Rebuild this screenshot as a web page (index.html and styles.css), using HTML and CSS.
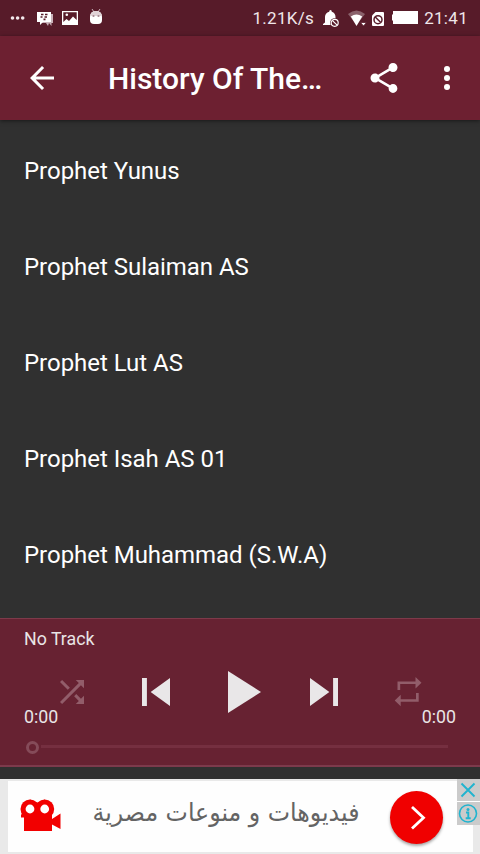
FILE: index.html
```
<!DOCTYPE html>
<html lang="en">
<head>
<meta charset="utf-8">
<title>History Of The…</title>
<link rel="stylesheet" href="styles.css">
</head>
<body>
<div class="status">
  <svg class="s-dots" width="16" height="16" viewBox="0 0 16 16" fill="#f3e9ec"><circle cx="2.500" cy="8" r="1.800"/><circle cx="7.600" cy="8" r="1.800"/><circle cx="12.700" cy="8" r="1.800"/></svg>
  <svg class="s-chat" width="17" height="16" viewBox="0 0 17 16"><path d="M4 3h12v9h-1.500v3l-2.500-3-1 3-2-3H4z" fill="#c9b2b9"/><path d="M0 1h14v10H6l-3 3v-3H0z" fill="#fff"/><path d="M4 3.500h2.500M8 3.500h2.500M3.500 6h2M7.500 6h2.500M6.500 8.300h2" stroke="#571b29" stroke-width="1.700"/></svg>
  <svg class="s-image" width="16" height="16" viewBox="0 0 16 16"><path d="M0 1h16v14H0z" fill="#fff"/><path d="M1.300 2.300h13.400V10L11 6.500 7 11 4.500 9l-3.200 3z" fill="#571b29"/><circle cx="4.800" cy="4.700" r="1.300" fill="#fff"/></svg>
  <svg class="s-droid" width="14" height="16" viewBox="0 0 14 16"><path d="M3 0l2 3M11 0L9 3" stroke="#c9b2b9"/><path d="M1 8q0-6 6-6t6 6v3q0 4-4 4H5q-4 0-4-4z" fill="#fff"/><path d="M1 7q1-5 6-5t6 5z" fill="#e0d2d6"/><circle cx="4.500" cy="7" r="1.100" fill="#a78a93"/><circle cx="9.500" cy="7" r="1.100" fill="#a78a93"/></svg>
  <span class="speed">1.21K/s</span>
  <svg class="s-bell" width="17" height="18" viewBox="0 0 17 18"><path d="M7.500 0q1.300 0 1.300 1.700Q12.500 3 12.500 7v6l1.500 2H0v-1l2-1.500V7q0-4 4.200-5.300Q6.200 0 7.500 0z" fill="#fff"/><circle cx="11.700" cy="12.800" r="4.600" fill="#571b29"/><circle cx="11.700" cy="12.800" r="3.500" fill="none" stroke="#fff" stroke-width="1.200"/><path d="M9.300 10.400l4.800 4.800" stroke="#fff" stroke-width="1.200"/></svg>
  <svg class="s-wifi" width="19" height="18" viewBox="0 0 19 18"><path d="M0 4q8.500-7 17 0L8.500 15z" fill="#8a616b"/><path d="M2.800 6.500q5.700-4 11.400 0L8.500 16z" fill="#fff"/><path d="M12.500 12.500h6L15.500 16z" fill="#fff" stroke="#571b29" stroke-width=".8"/></svg>
  <svg class="s-sim" width="12" height="16" viewBox="0 0 12 16"><path d="M3.500 1H11q1 0 1 1v12q0 1-1 1H1q-1 0-1-1V4.500z" fill="#fff"/><circle cx="6" cy="8.700" r="4" fill="none" stroke="#571b29" stroke-width="1.500"/><path d="M3.200 6l5.600 5.500" stroke="#571b29" stroke-width="1.500"/></svg>
  <svg class="s-battery" width="26" height="13" viewBox="0 0 26 13"><path d="M1 0h25v13H1V9.500H0v-6h1z" fill="#fff"/></svg>
  <span class="clock">21:41</span>
</div>
<header class="appbar">
  <svg class="back" width="36" height="36" viewBox="0 0 24 24"><path d="M20 11H7.830l5.590-5.590L12 4l-8 8 8 8 1.410-1.410L7.830 13H20z" fill="#fff"/></svg>
  <h1>History Of The…</h1>
  <svg class="share" width="36" height="36" viewBox="0 0 24 24"><path d="M18 16.080c-.76 0-1.440.3-1.960.77L8.910 12.700c.05-.23.09-.46.09-.7s-.04-.47-.09-.7l7.050-4.110c.54.5 1.250.81 2.040.81 1.660 0 3-1.340 3-3s-1.340-3-3-3-3 1.340-3 3c0 .24.04.47.09.7L8.040 9.810C7.500 9.310 6.790 9 6 9c-1.660 0-3 1.340-3 3s1.340 3 3 3c.79 0 1.500-.31 2.040-.81l7.120 4.160c-.05.21-.08.43-.08.65 0 1.610 1.310 2.920 2.920 2.920s2.920-1.310 2.920-2.920-1.310-2.920-2.920-2.920z" fill="#fff"/></svg>
  <svg class="more" width="36" height="36" viewBox="0 0 24 24" fill="#fff"><circle cx="12" cy="6" r="2"/><circle cx="12" cy="12" r="2"/><circle cx="12" cy="18" r="2"/></svg>
</header>
<ul class="list">
  <li>Prophet Yunus</li>
  <li>Prophet Sulaiman AS</li>
  <li>Prophet Lut AS</li>
  <li>Prophet Isah AS 01</li>
  <li>Prophet Muhammad (S.W.A)</li>
</ul>
<section class="player">
  <div class="track">No Track</div>
  <div class="controls">
    <svg width="36" height="36" viewBox="0 0 24 24"><path d="M10.590 9.170L5.410 4 4 5.410l5.170 5.170 1.420-1.410zM14.500 4l2.040 2.040L4 18.590 5.410 20 17.960 7.460 20 9.500V4h-5.500zm.33 9.410l-1.410 1.410 3.130 3.130L14.500 20H20v-5.500l-2.040 2.040-3.130-3.130z" fill="#925d6a"/></svg>
    <svg width="56" height="56" viewBox="0 0 24 24"><path d="M6 6h2.100v12H6zm3.700 6L18 18V6z" fill="#e9e7e8"/></svg>
    <svg width="72" height="72" viewBox="0 0 24 24"><path d="M8 5v14l11-7z" fill="#e9e7e8"/></svg>
    <svg width="56" height="56" viewBox="0 0 24 24"><path d="M6 18l8.300-6L6 6zM15.900 6v12H18V6z" fill="#e9e7e8"/></svg>
    <svg width="36" height="36" viewBox="0 0 36 36"><path d="M7.500 16V7.500h18v-4.500l6 5.800-6 5.700v-4.500H10.200v6zM28.700 19v8.700h-18v4.500l-6-5.700 6-5.800v4.500h15.300V19z" fill="#925d6a"/></svg>
  </div>
  <div class="times"><span>0:00</span><span>0:00</span></div>
  <div class="seek"><i class="thumb"></i><i class="rail"></i></div>
</section>
<aside class="ad">
  <div class="card">
    <svg class="camera" width="41" height="33" viewBox="0 0 41 33"><g fill="#f20000"><circle cx="10" cy="10" r="9.500"/><circle cx="24.700" cy="10" r="9.500"/><path d="M10 .500L17.300 4l7.400-3.500L32 16v4l8.500-5.500V30L32 25.500V32H4V18.500H1V16z"/></g><circle cx="10" cy="10" r="4.400" fill="#fff"/><circle cx="24.700" cy="10" r="4.400" fill="#fff"/></svg>
    <svg class="ad-text" width="270" height="50" viewBox="0 0 270 50"><text x="135" y="29" text-anchor="middle" direction="rtl" textLength="267" lengthAdjust="spacingAndGlyphs">فيديوهات و منوعات مصرية</text></svg>
    <div class="go"><svg width="53" height="53" viewBox="0 0 53 53"><path d="M22 16l11.500 10.800L22 37.500" fill="none" stroke="#fff" stroke-width="2.800"/></svg></div>
  </div>
  <div class="badges">
    <svg width="23" height="22" viewBox="0 0 23 22"><path d="M4.500 4.500l13 13M17.500 4.500l-13 13" stroke="#20b4cf" stroke-width="1.900"/></svg>
    <svg width="23" height="23" viewBox="0 0 23 23"><circle cx="11" cy="11.500" r="8.500" fill="none" stroke="#20b4cf" stroke-width="1.600"/><circle cx="11" cy="7.500" r="1.500" fill="#20b4cf"/><path d="M9 10.500h2.300v5.500M8.700 16.200h5" fill="none" stroke="#20b4cf" stroke-width="1.900"/></svg>
  </div>
</aside>
</body>
</html>
```
FILE: styles.css
```
* { box-sizing: border-box; }
body {
  margin: 0;
  width: 480px;
  height: 854px;
  overflow: hidden;
  display: flex;
  flex-direction: column;
  background: #303030;
  color: #fff;
  font-family: Roboto, sans-serif;
}
svg { display: block; flex: none; }

.status {
  flex: none;
  height: 36px;
  display: flex;
  align-items: center;
  background: #571b29;
  color: #f0e6e9;
  font-size: 17px;
  letter-spacing: .3px;
}
.s-dots { margin-left: 10px; }
.s-chat { margin: 1px 0 0 11px; }
.s-image { margin-left: 8px; }
.s-droid { margin: -2px 0 0 11px; }
.speed { margin-left: auto; }
.s-bell { margin: 2px 0 0 9px; }
.s-wifi { margin: 2px 0 0 8px; }
.s-sim { margin: 1px 0 0 5px; }
.s-battery { margin: -1px 0 0 8px; }
.clock { margin: 0 12px 0 6px; }

.appbar {
  flex: none;
  height: 84px;
  display: flex;
  align-items: center;
  padding: 0 15px 0 24px;
  background: #6d2031;
  box-shadow: 0 1px 4px rgba(0, 0, 0, .5);
}
.appbar h1 {
  margin: 2px 0 0 48px;
  width: 220px;
  font-size: 30px;
  font-weight: 500;
  line-height: 40px;
  white-space: nowrap;
}
.share { margin-left: 38px; }
.more { margin: 0 0 0 27px; }

.list {
  flex: none;
  height: 498px;
  margin: 0;
  padding: 3px 0 0;
  list-style: none;
}
.list li {
  height: 96px;
  padding-left: 24px;
  font-size: 24px;
  letter-spacing: -.03px;
  line-height: 96px;
}

.player {
  flex: none;
  height: 149px;
  padding: 8px 24px 0;
  background: #672232;
  border-top: 1px solid #7d3a4a;
  border-bottom: 2px solid #7d3a4c;
  color: #e9e5e6;
  font-size: 17.8px;
}
.track { height: 24px; line-height: 24px; }
.controls {
  height: 72px;
  margin: 5px 30px 0;
  display: flex;
  align-items: center;
  justify-content: space-between;
}
.controls svg:nth-child(2) { margin-left: 18px; }
.controls svg:nth-child(4) { margin-right: 18px; }
.times {
  display: flex;
  justify-content: space-between;
  height: 20px;
  margin-top: -21px;
  line-height: 20px;
}
.seek {
  display: flex;
  align-items: center;
  height: 20px;
  margin-top: 10px;
  padding: 0 8px 0 2px;
}
.thumb {
  width: 13px;
  height: 13px;
  border: 3px solid #854b59;
  border-radius: 50%;
}
.rail { flex: 1; height: 3px; margin: -1px 0 0 2px; background: #752f40; }

.ad {
  position: relative;
  flex: none;
  height: 75px;
  margin-top: 12px;
  padding: 2px 7px 2px 8px;
  background: #e9e9e9;
}
.card {
  height: 71px;
  display: flex;
  align-items: center;
  padding-left: 12px;
  background: #fefefe;
}
.camera { margin-top: -2px; }
.ad-text { margin-left: 30px; overflow: visible; }
.ad-text text { font: 25px "DejaVu Sans", sans-serif; fill: #646464; }
.go {
  width: 53px;
  height: 53px;
  margin: 1px 0 0 29px;
  border-radius: 50%;
  background: #f00000;
  box-shadow: 0 2px 3px rgba(0, 0, 0, .35);
}
.badges {
  position: absolute;
  top: 0;
  right: 0;
  display: grid;
  gap: 1px;
  background: #fff;
}
.badges svg { background: #cbcbcb; }
```
